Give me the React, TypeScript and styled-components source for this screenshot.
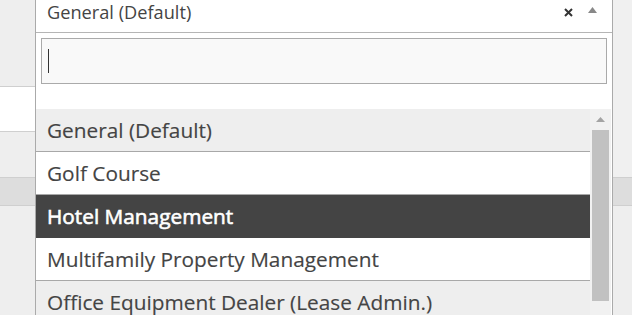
import styled, { createGlobalStyle } from 'styled-components'

const options = [
  'General (Default)',
  'Golf Course',
  'Hotel Management',
  'Multifamily Property Management',
  'Office Equipment Dealer (Lease Admin.)',
]

const GlobalStyle = createGlobalStyle`
  html, body {
    margin: 0;
    padding: 0;
    background: #eeeeee;
    font-family: "Open Sans", "Noto Sans", sans-serif;
    overflow: hidden;
  }
`

const Page = styled.div`
  position: relative;
  display: flex;
  width: 632px;
  height: 315px;
`

const Rail = styled.div<{ $width: string }>`
  display: flex;
  flex-direction: column;
  width: ${({ $width }) => $width};
  flex: ${({ $width }) => ($width === 'auto' ? '1' : 'none')};
`

const Band = styled.div<{ $h: number; $bg: string; $line?: boolean }>`
  height: ${({ $h }) => $h}px;
  background: ${({ $bg }) => $bg};
  border-bottom: ${({ $line }) => ($line ? '1px solid #cfcfcf' : 'none')};
  flex: ${({ $h }) => ($h === 0 ? '1' : 'none')};
`

const Dropdown = styled.div`
  position: absolute;
  left: 35px;
  top: 0;
  width: 576px;
  height: 315px;
  background: #fff;
  border-left: 1px solid #aaa;
  border-right: 1px solid #aaa;
  display: flex;
  flex-direction: column;
`

const Selection = styled.div`
  height: 32px;
  border-bottom: 1px solid #b5b5b5;
  display: flex;
  align-items: flex-start;
  padding: 0 8px 0 11px;
  box-sizing: content-box;
`

const SelectionText = styled.span`
  flex: 1;
  font-size: 18.2px;
  line-height: 24px;
  color: #444;
`

const IconSlot = styled.span<{ $w: number }>`
  width: ${({ $w }) => $w}px;
  height: 24px;
  display: flex;
  align-items: center;
  justify-content: center;
`

const SearchWrap = styled.div`
  padding: 5px 5px 25px 5px;
`

const SearchBox = styled.div`
  height: 44px;
  border: 1px solid #aaa;
  background: #f9f9f9;
  display: flex;
  align-items: center;
  padding-left: 6px;
`

const Caret = styled.span`
  width: 1px;
  height: 24px;
  background: #333;
`

const ListArea = styled.div`
  flex: 1;
  display: flex;
  min-height: 0;
  overflow: hidden;
`

const Items = styled.ul`
  list-style: none;
  margin: 0;
  padding: 0;
  width: 554px;
`

const Item = styled.li<{ $tone: 'plain' | 'muted' | 'active' }>`
  height: 42px;
  border-bottom: 1px solid ${({ $tone }) => ($tone === 'active' ? '#444' : '#a8a8a8')};
  background: ${({ $tone }) =>
    $tone === 'active' ? '#444' : $tone === 'muted' ? '#eeeeee' : '#fff'};
  color: ${({ $tone }) => ($tone === 'active' ? '#fff' : '#444')};
  -webkit-text-stroke: ${({ $tone }) => ($tone === 'active' ? '0.6px #fff' : '0.15px #444')};
  font-size: 20.8px;
  line-height: 42px;
  padding-left: 11px;
  white-space: nowrap;
`

const Scrollbar = styled.div`
  width: 21px;
  background: #f1f1f1;
  display: flex;
  flex-direction: column;
  align-items: center;
`

const ScrollArrow = styled.div`
  height: 21px;
  display: flex;
  align-items: center;
  justify-content: center;
  width: 100%;
`

const Thumb = styled.div`
  width: 17px;
  height: 171px;
  background: #c1c1c1;
`

export default function App() {
  return (
    <>
      <GlobalStyle />
      <Page>
        <Rail $width="35px">
          <Band $h={86} $bg="#eeeeee" $line />
          <Band $h={44} $bg="#ffffff" $line />
          <Band $h={45} $bg="#eeeeee" $line />
          <Band $h={27} $bg="#dddddd" $line />
          <Band $h={0} $bg="#eeeeee" />
        </Rail>
        <Rail $width="auto">
          <Band $h={177} $bg="#f0f0f0" $line />
          <Band $h={27} $bg="#dddddd" $line />
          <Band $h={0} $bg="#eeeeee" />
        </Rail>
        <Dropdown>
          <Selection>
            <SelectionText>General (Default)</SelectionText>
            <IconSlot $w={24}>
              <svg width="9" height="9" viewBox="0 0 9 9">
                <path d="M1 1L8 8M8 1L1 8" stroke="#333" strokeWidth="2" />
              </svg>
            </IconSlot>
            <IconSlot $w={24}>
              <svg width="9" height="6" viewBox="0 0 9 6" style={{ marginTop: -4 }}>
                <path d="M0 6L4.5 0L9 6Z" fill="#888" />
              </svg>
            </IconSlot>
          </Selection>
          <SearchWrap>
            <SearchBox>
              <Caret />
            </SearchBox>
          </SearchWrap>
          <ListArea>
            <Items>
              {options.map((o, i) => (
                <Item
                  key={o}
                  $tone={i === 2 ? 'active' : i === 0 || i === 4 ? 'muted' : 'plain'}
                >
                  {o}
                </Item>
              ))}
            </Items>
            <Scrollbar>
              <ScrollArrow>
                <svg width="9" height="5" viewBox="0 0 9 5">
                  <path d="M0 5L4.5 0L9 5Z" fill="#a3a3a3" />
                </svg>
              </ScrollArrow>
              <Thumb />
            </Scrollbar>
          </ListArea>
        </Dropdown>
      </Page>
    </>
  )
}
